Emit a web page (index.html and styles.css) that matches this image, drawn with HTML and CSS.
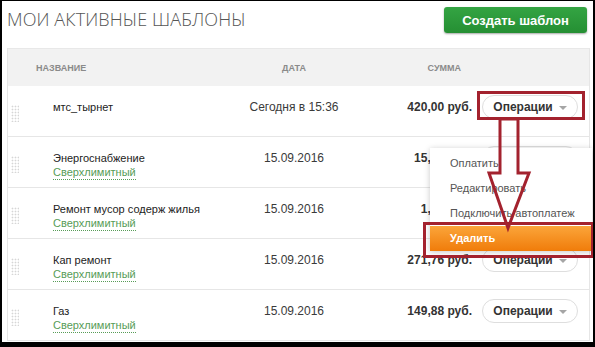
FILE: index.html
```html
<!DOCTYPE html>
<html lang="ru">
<head>
<meta charset="utf-8">
<title>Мои активные шаблоны</title>
<link rel="stylesheet" href="styles.css">
</head>
<body>
<div class="frame">
  <div class="top">
    <h1 class="title">Мои активные шаблоны</h1>
    <button class="create">Создать шаблон</button>
  </div>
  <div class="table">
    <div class="thead">
      <div class="th th-name">Название</div>
      <div class="th th-date">Дата</div>
      <div class="th th-sum">Сумма</div>
      <div></div>
    </div>
    <div class="row">
      <div class="cell"><div class="handle"></div></div>
      <div class="cell name"><div>мтс_тырнет</div></div>
      <div class="cell date">Сегодня в 15:36</div>
      <div class="cell sum">420,00 руб.</div>
      <div class="cell ops"><button class="op-btn">Операции<span class="caret"></span></button></div>
    </div>
    <div class="row">
      <div class="cell"><div class="handle"></div></div>
      <div class="cell name"><div>Энергоснабжение</div><span class="tag">Сверхлимитный</span></div>
      <div class="cell date">15.09.2016</div>
      <div class="cell sum">15,53 руб.</div>
      <div class="cell ops"><button class="op-btn">Операции<span class="caret"></span></button></div>
    </div>
    <div class="row">
      <div class="cell"><div class="handle"></div></div>
      <div class="cell name"><div>Ремонт мусор содерж жилья</div><span class="tag">Сверхлимитный</span></div>
      <div class="cell date">15.09.2016</div>
      <div class="cell sum">1,00 руб.</div>
      <div class="cell ops"><button class="op-btn">Операции<span class="caret"></span></button></div>
    </div>
    <div class="row">
      <div class="cell"><div class="handle"></div></div>
      <div class="cell name"><div>Кап ремонт</div><span class="tag">Сверхлимитный</span></div>
      <div class="cell date">15.09.2016</div>
      <div class="cell sum">271,76 руб.</div>
      <div class="cell ops"><button class="op-btn">Операции<span class="caret"></span></button></div>
    </div>
    <div class="row">
      <div class="cell"><div class="handle"></div></div>
      <div class="cell name"><div>Газ</div><span class="tag">Сверхлимитный</span></div>
      <div class="cell date">15.09.2016</div>
      <div class="cell sum">149,88 руб.</div>
      <div class="cell ops"><button class="op-btn">Операции<span class="caret"></span></button></div>
    </div>
  </div>

  <ul class="menu">
    <li>Оплатить</li>
    <li>Редактировать</li>
    <li>Подключить автоплатеж</li>
    <li class="danger">Удалить</li>
  </ul>

  <div class="mark mark-btn"></div>
  <div class="mark mark-del"></div>
  <svg class="arrow" width="591" height="341" viewBox="0 0 591 341">
    <polygon points="498,118 498,172 487,172 506,227 527,172 516,172 516,118" fill="none" stroke="#a3222e" stroke-width="3" stroke-linejoin="miter"/>
  </svg>
</div>
</body>
</html>
```

FILE: styles.css
```css
html, body {
  margin: 0;
  padding: 0;
  background: #000;
}
body {
  width: 595px;
  height: 347px;
  overflow: hidden;
  font-family: "Liberation Sans", Arial, sans-serif;
}
.frame {
  position: relative;
  margin: 1px 2px 0 2px;
  width: 591px;
  height: 341px;
  background: #fff;
  overflow: hidden;
}
.top {
  display: flex;
  justify-content: space-between;
  align-items: flex-start;
  height: 47px;
  box-sizing: border-box;
  padding: 6px 6px 0 5px;
}
.title {
  margin: 1px 0 0 0;
  font-family: "Open Sans", sans-serif;
  font-weight: 300;
  font-size: 18px;
  line-height: 22px;
  color: #555;
  text-transform: uppercase;
  letter-spacing: 0.1px;
}
.create {
  width: 143px;
  height: 26px;
  border: 0;
  border-radius: 3px;
  background: linear-gradient(#34a443, #258f33);
  box-shadow: 0 1px 2px rgba(0,0,0,0.35);
  color: #fff;
  font-family: "Liberation Sans", Arial, sans-serif;
  font-weight: bold;
  font-size: 13px;
  padding: 0;
}
.table {
  margin: 0 3px 0 5px;
  border-left: 1px solid #e6e6e6;
  border-right: 1px solid #e6e6e6;
}
.thead,
.row {
  display: grid;
  grid-template-columns: 45px 180px 122px 117px 117px;
}
.thead {
  height: 38px;
  align-items: center;
  background: #f2f2f2;
  border-top: 1px solid #e8e8e8;
  box-sizing: border-box;
}
.th {
  font-size: 9px;
  font-weight: bold;
  color: #8a8a8a;
  text-transform: uppercase;
}
.th-name {
  grid-column: 1 / 3;
  padding-left: 28px;
}
.th-date {
  text-align: center;
}
.th-sum {
  text-align: right;
  padding-right: 11px;
}
.row {
  height: 51px;
  box-sizing: border-box;
  border-bottom: 1px solid #e6e6e6;
}
.cell {
  padding-top: 14px;
  line-height: 14px;
}
.handle {
  width: 8px;
  height: 17px;
  margin: 5px 0 0 3px;
  background-image: radial-gradient(circle, #d6d6d6 0.8px, transparent 1.1px);
  background-size: 3px 3px;
}
.name {
  font-size: 11px;
  color: #222;
}
.tag {
  display: inline-block;
  color: #579c57;
  border-bottom: 1px dotted #579c57;
  line-height: 13px;
}
.date {
  font-size: 12px;
  color: #3a3a3a;
  text-align: center;
}
.sum {
  font-size: 12px;
  font-weight: bold;
  color: #333;
  text-align: right;
}
.ops {
  padding-top: 9px;
  padding-left: 10px;
}
.op-btn {
  display: flex;
  align-items: center;
  justify-content: center;
  width: 96px;
  height: 24px;
  padding: 0;
  border: 1px solid #dedede;
  border-radius: 12px;
  background: #fff;
  font-family: "Liberation Sans", Arial, sans-serif;
  font-weight: bold;
  font-size: 12px;
  color: #333;
}
.caret {
  width: 0;
  height: 0;
  margin-left: 6px;
  margin-top: 2px;
  border-left: 4px solid transparent;
  border-right: 4px solid transparent;
  border-top: 4px solid #a5a5a5;
}
.menu {
  position: absolute;
  left: 428px;
  top: 147px;
  width: 162px;
  margin: 0;
  padding: 3px 0 0 0;
  list-style: none;
  background: #fff;
  box-shadow: 0 1px 6px rgba(0,0,0,0.22);
}
.menu li {
  height: 25px;
  line-height: 25px;
  padding-left: 20px;
  font-size: 11px;
  color: #555;
}
.menu .danger {
  background: linear-gradient(#fba53a, #f07c0a);
  color: #fff;
  font-weight: bold;
}
.mark {
  position: absolute;
  box-sizing: border-box;
  border: 3px solid #a3222e;
}
.mark-btn {
  left: 475px;
  top: 90px;
  width: 108px;
  height: 29px;
}
.mark-del {
  left: 421px;
  top: 221px;
  width: 171px;
  height: 36px;
}
.arrow {
  position: absolute;
  left: 0;
  top: 0;
  pointer-events: none;
}
```
